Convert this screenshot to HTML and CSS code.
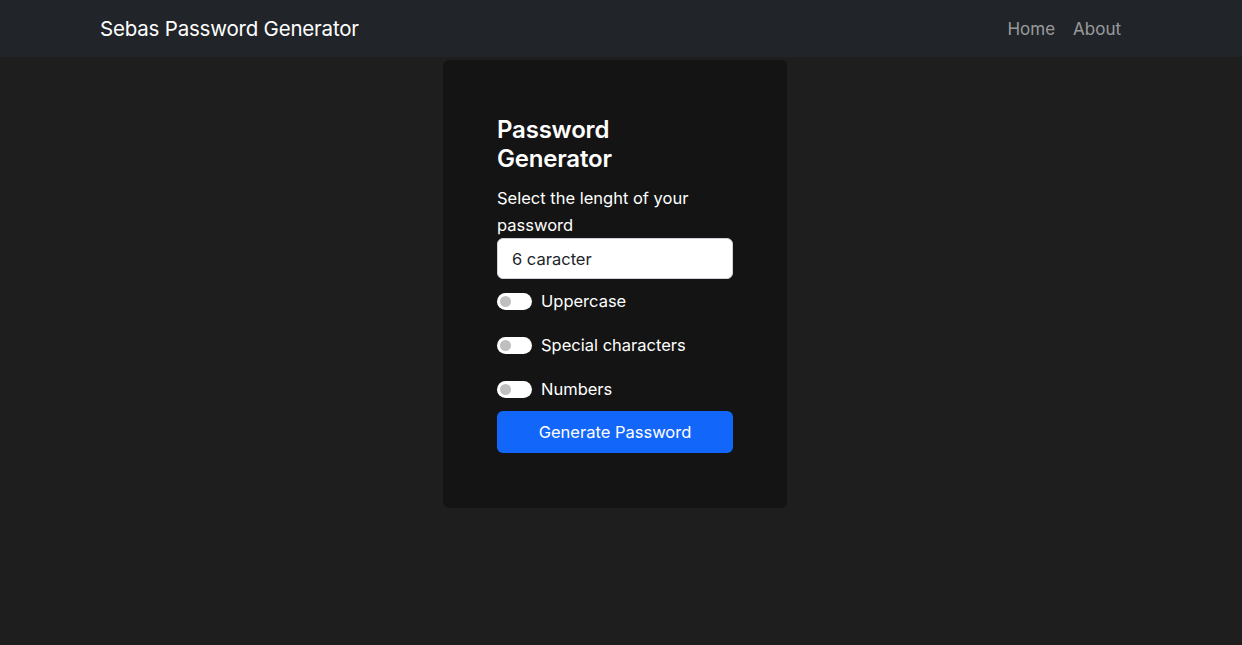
FILE: index.html
```html
<!DOCTYPE html>
<html lang="en">
<head>
<meta charset="utf-8">
<title>Sebas Password Generator</title>
<link rel="stylesheet" href="styles.css">
</head>
<body>
<nav class="navbar">
  <div class="nav-inner">
    <a class="brand" href="#">Sebas Password Generator</a>
    <ul class="nav-links">
      <li><a href="#">Home</a></li>
      <li><a href="#">About</a></li>
    </ul>
  </div>
</nav>
<main class="main">
  <section class="card">
    <h1 class="title">Password<br>Generator</h1>
    <label class="label" for="len">Select the lenght of your password</label>
    <div class="input">6 caracter</div>
    <div class="switch-row"><span class="switch"><span class="knob"></span></span><span class="switch-label">Uppercase</span></div>
    <div class="switch-row"><span class="switch"><span class="knob"></span></span><span class="switch-label">Special characters</span></div>
    <div class="switch-row"><span class="switch"><span class="knob"></span></span><span class="switch-label">Numbers</span></div>
    <button class="btn">Generate Password</button>
  </section>
</main>
</body>
</html>
```

FILE: styles.css
```css
* { box-sizing: border-box; }
html, body { margin: 0; padding: 0; }
body {
  background: #1e1e1e;
  font-family: Inter, "Noto Sans", "Liberation Sans", sans-serif;
  color: #fff;
  height: 645px;
}
.navbar {
  background: #212529;
  height: 57px;
}
.nav-inner {
  width: 1044px;
  margin: 0 auto;
  height: 57px;
  display: flex;
  align-items: center;
  justify-content: space-between;
  padding: 0 22px 0 1px;
}
.brand {
  color: #fff;
  text-decoration: none;
  font-size: 20.5px;
  letter-spacing: -0.2px;
}
.nav-links {
  list-style: none;
  margin: 0;
  padding: 0;
  display: flex;
  gap: 18px;
}
.nav-links a {
  color: rgba(255,255,255,0.55);
  text-decoration: none;
  font-size: 17px;
}
.main {
  display: flex;
  justify-content: center;
  padding-top: 3px;
  padding-right: 12px;
}
.card {
  width: 344px;
  background: #141414;
  border-radius: 6px;
  padding: 55px 54px 55px 54px;
  display: flex;
  flex-direction: column;
}
.title {
  margin: 0 0 12px 0;
  font-size: 24px;
  font-weight: 600;
  line-height: 29px;
  letter-spacing: -0.2px;
}
.label {
  font-size: 16.5px;
  line-height: 27px;
  width: 210px;
}
.input {
  margin-top: -1px;
  height: 41px;
  background: #fff;
  color: #212529;
  border: 1px solid #ced4da;
  border-radius: 6px;
  padding: 0 14px;
  font-size: 16.5px;
  display: flex;
  align-items: center;
}
.switch-row {
  display: flex;
  align-items: center;
  height: 44px;
  gap: 9px;
}
.switch {
  width: 35px;
  height: 17px;
  background: #fff;
  border-radius: 9px;
  display: flex;
  align-items: center;
  padding-left: 3px;
}
.knob {
  width: 11px;
  height: 11px;
  border-radius: 50%;
  background: #bfbfbf;
}
.switch-label {
  font-size: 16.5px;
}
.btn {
  height: 42px;
  border: none;
  border-radius: 6px;
  background: #1366fa;
  color: #fff;
  font-family: inherit;
  font-size: 16.5px;
}
```
